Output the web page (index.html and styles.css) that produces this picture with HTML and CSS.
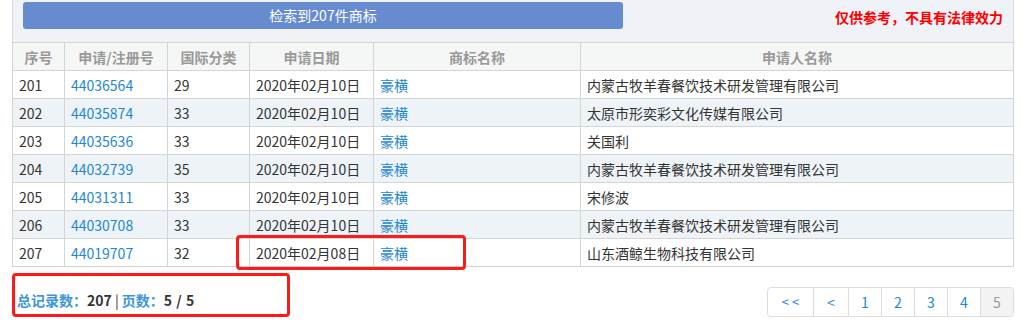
FILE: index.html
```html
<!DOCTYPE html>
<html lang="zh-CN">
<head>
<meta charset="utf-8">
<title>商标检索结果</title>
<link rel="stylesheet" href="styles.css">
</head>
<body>
<div class="wrap">
  <div class="topbar">
    <div class="result-btn">检索到207件商标</div>
    <div class="notice">仅供参考，不具有法律效力</div>
  </div>
  <table class="list">
    <colgroup>
      <col class="c1"><col class="c2"><col class="c3"><col class="c4"><col class="c5"><col class="c6">
    </colgroup>
    <thead>
      <tr><th>序号</th><th>申请/注册号</th><th>国际分类</th><th>申请日期</th><th>商标名称</th><th>申请人名称</th></tr>
    </thead>
    <tbody>
      <tr><td>201</td><td><a>44036564</a></td><td>29</td><td>2020年02月10日</td><td><a>豪横</a></td><td>内蒙古牧羊春餐饮技术研发管理有限公司</td></tr>
      <tr><td>202</td><td><a>44035874</a></td><td>33</td><td>2020年02月10日</td><td><a>豪横</a></td><td>太原市形奕彩文化传媒有限公司</td></tr>
      <tr><td>203</td><td><a>44035636</a></td><td>33</td><td>2020年02月10日</td><td><a>豪横</a></td><td>关国利</td></tr>
      <tr><td>204</td><td><a>44032739</a></td><td>35</td><td>2020年02月10日</td><td><a>豪横</a></td><td>内蒙古牧羊春餐饮技术研发管理有限公司</td></tr>
      <tr><td>205</td><td><a>44031311</a></td><td>33</td><td>2020年02月10日</td><td><a>豪横</a></td><td>宋修波</td></tr>
      <tr><td>206</td><td><a>44030708</a></td><td>33</td><td>2020年02月10日</td><td><a>豪横</a></td><td>内蒙古牧羊春餐饮技术研发管理有限公司</td></tr>
      <tr><td>207</td><td><a>44019707</a></td><td>32</td><td>2020年02月08日</td><td><a>豪横</a></td><td>山东酒鲸生物科技有限公司</td></tr>
    </tbody>
  </table>
  <div class="footer">
    <div class="summary"><span class="lbl">总记录数：</span><span class="num">207</span><span class="sep"> | </span><span class="lbl">页数：</span><span class="num">5 <span class="slash">/</span> 5</span></div>
    <ul class="pager">
      <li class="first">&lt; &lt;</li>
      <li class="prev">&lt;</li>
      <li>1</li>
      <li>2</li>
      <li>3</li>
      <li>4</li>
      <li class="active">5</li>
    </ul>
  </div>
  <div class="mark mark-row"></div>
  <div class="mark mark-summary"></div>
</div>
</body>
</html>
```

FILE: styles.css
```css
html, body {
  margin: 0;
  padding: 0;
  background: #fff;
}
body {
  font-family: "Noto Sans CJK SC", "Microsoft YaHei", sans-serif;
  font-size: 14px;
  color: #333;
}
.wrap {
  position: relative;
  width: 1002px;
  margin-left: 12px;
}
.topbar {
  height: 42px;
  background: #eff3f8;
  border-left: 1px solid #d6d9dc;
  border-right: 1px solid #d6d9dc;
  box-sizing: border-box;
  display: flex;
  align-items: flex-start;
  justify-content: space-between;
  padding: 2px 10px 0 10px;
}
.result-btn {
  width: 600px;
  height: 27px;
  line-height: 26px;
  background: #668ccf;
  color: #fff;
  text-align: center;
  border-radius: 3px;
  font-size: 14px;
}
.notice {
  color: #f00;
  font-weight: bold;
  font-size: 14px;
  line-height: 30px;
}
.list {
  width: 1002px;
  border-collapse: collapse;
  table-layout: fixed;
}
.c1 { width: 52px; }
.c2 { width: 103px; }
.c3 { width: 82px; }
.c4 { width: 124px; }
.c5 { width: 207px; }
.c6 { width: auto; }
.list tr {
  height: 28px;
}
.list th, .list td {
  border: 1px solid #d4d4d4;
  padding: 0 0 0 6px;
  white-space: nowrap;
  line-height: 20px;
}
.list th {
  background: #f5f6f6;
  color: #999;
  font-weight: bold;
  text-align: center;
  padding: 0;
}
.list td {
  text-align: left;
  color: #333;
}
.list tbody tr:nth-child(even) td {
  background: #eef3f8;
}
.list a {
  color: #1d87d3;
  text-decoration: none;
}
.footer {
  display: flex;
  justify-content: space-between;
  align-items: center;
  padding-top: 20px;
}
.summary {
  font-weight: bold;
  font-size: 14px;
  padding-left: 5px;
  padding-bottom: 4px;
}
.summary .lbl {
  color: #3c95da;
}
.summary .num {
  color: #333;
}
.summary .slash {
  padding: 0 1px;
}
.summary .sep {
  color: #333;
  font-weight: normal;
}
.pager {
  display: flex;
  list-style: none;
  margin: 0;
  padding: 0;
  border: 1px solid #ddd;
  border-radius: 4px;
  overflow: hidden;
  box-shadow: 0 1px 1px rgba(0,0,0,0.05);
}
.pager li {
  width: 32px;
  height: 28px;
  line-height: 28px;
  text-align: center;
  color: #1d87d3;
  font-size: 14px;
  border-left: 1px solid #ddd;
}
.pager li:first-child {
  border-left: 0;
}
.pager .first {
  width: 45px;
  font-size: 13px;
}
.pager .prev {
  width: 34px;
}
.pager .active {
  background: #f3f3f3;
  color: #999;
}
.mark {
  position: absolute;
  border: 3px solid #ff1a1a;
  border-radius: 4px;
  box-sizing: border-box;
}
.mark-row {
  left: 224px;
  top: 235px;
  width: 230px;
  height: 35px;
}
.mark-summary {
  left: 0;
  top: 273px;
  width: 278px;
  height: 44px;
}
```
